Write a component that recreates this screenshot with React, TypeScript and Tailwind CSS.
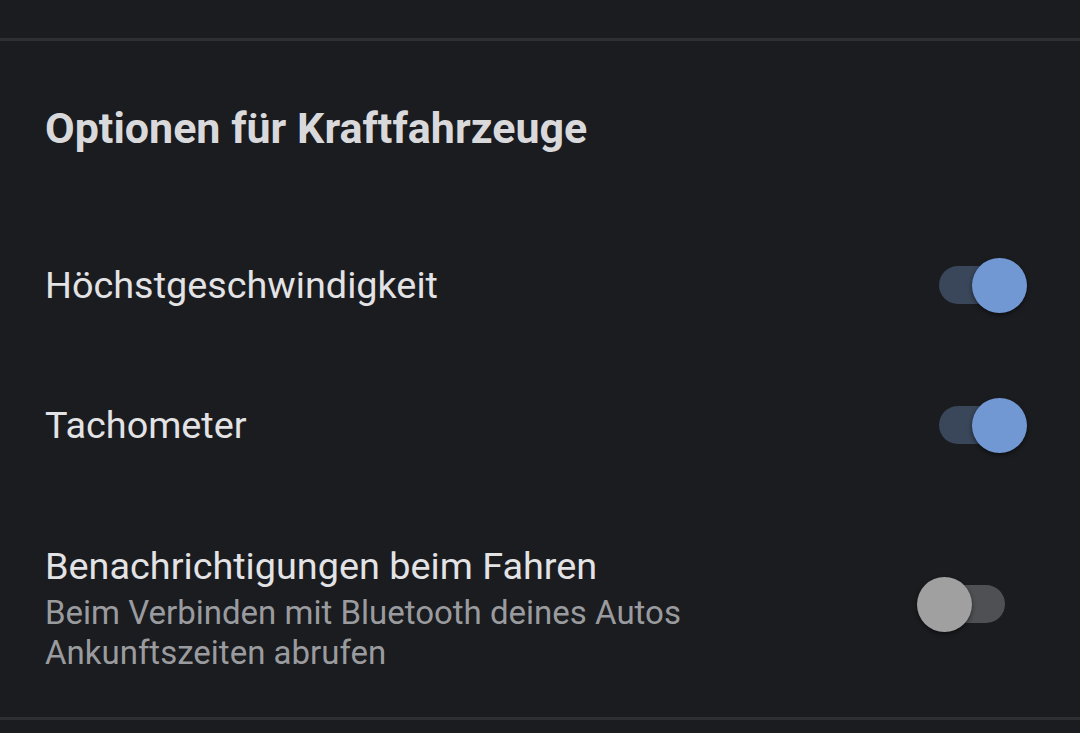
function Toggle({ on }: { on: boolean }) {
  return (
    <div className="relative h-[56px] w-[66px] shrink-0 flex items-center">
      <div
        className={
          on
            ? 'h-[38px] w-[66px] rounded-full bg-[#3a4659]'
            : 'h-[38px] w-[66px] rounded-full bg-[#4f5053]'
        }
      />
      <div
        className={
          on
            ? 'absolute left-[33px] top-[1px] h-[55px] w-[55px] rounded-full bg-[#7298d3] shadow-[0_2px_4px_rgba(0,0,0,0.5)]'
            : 'absolute -left-[22px] top-[1px] h-[55px] w-[55px] rounded-full bg-[#a0a0a0] shadow-[0_2px_4px_rgba(0,0,0,0.5)]'
        }
      />
    </div>
  );
}

interface RowProps {
  title: string;
  on: boolean;
}

function SettingRow({ title, on }: RowProps) {
  return (
    <div className="flex items-center justify-between h-[140px] pr-[75px]">
      <span className="text-[37.8px] leading-[44px] text-[#e3e3e5]">{title}</span>
      <Toggle on={on} />
    </div>
  );
}

export default function App() {
  return (
    <div
      className="w-[1080px] h-[733px] overflow-hidden bg-[#1b1c20]"
      style={{ fontFamily: 'Roboto, "Noto Sans", sans-serif' }}
    >
      <div className="h-[38px]" />
      <div className="h-[3px] bg-[#2e2f33]" />
      <div className="pl-[45px]">
        <h2 className="pt-[62px] pb-[62px] text-[43px] leading-[50px] font-bold text-[#d9d9db]">
          Optionen für Kraftfahrzeuge
        </h2>
        <SettingRow title="Höchstgeschwindigkeit" on />
        <SettingRow title="Tachometer" on />
        <div className="flex items-start justify-between pt-[49px] pb-[44px] pr-[75px]">
          <div className="flex flex-col">
            <span className="text-[37.8px] leading-[44px] text-[#e3e3e5]">
              Benachrichtigungen beim Fahren
            </span>
            <span className="mt-[5px] text-[33px] leading-[40px] text-[#9a9b9e] max-w-[700px]">
              Beim Verbinden mit Bluetooth deines Autos Ankunftszeiten abrufen
            </span>
          </div>
          <div className="mt-[32px]">
            <Toggle on={false} />
          </div>
        </div>
      </div>
      <div className="h-[3px] bg-[#2e2f33]" />
    </div>
  );
}
